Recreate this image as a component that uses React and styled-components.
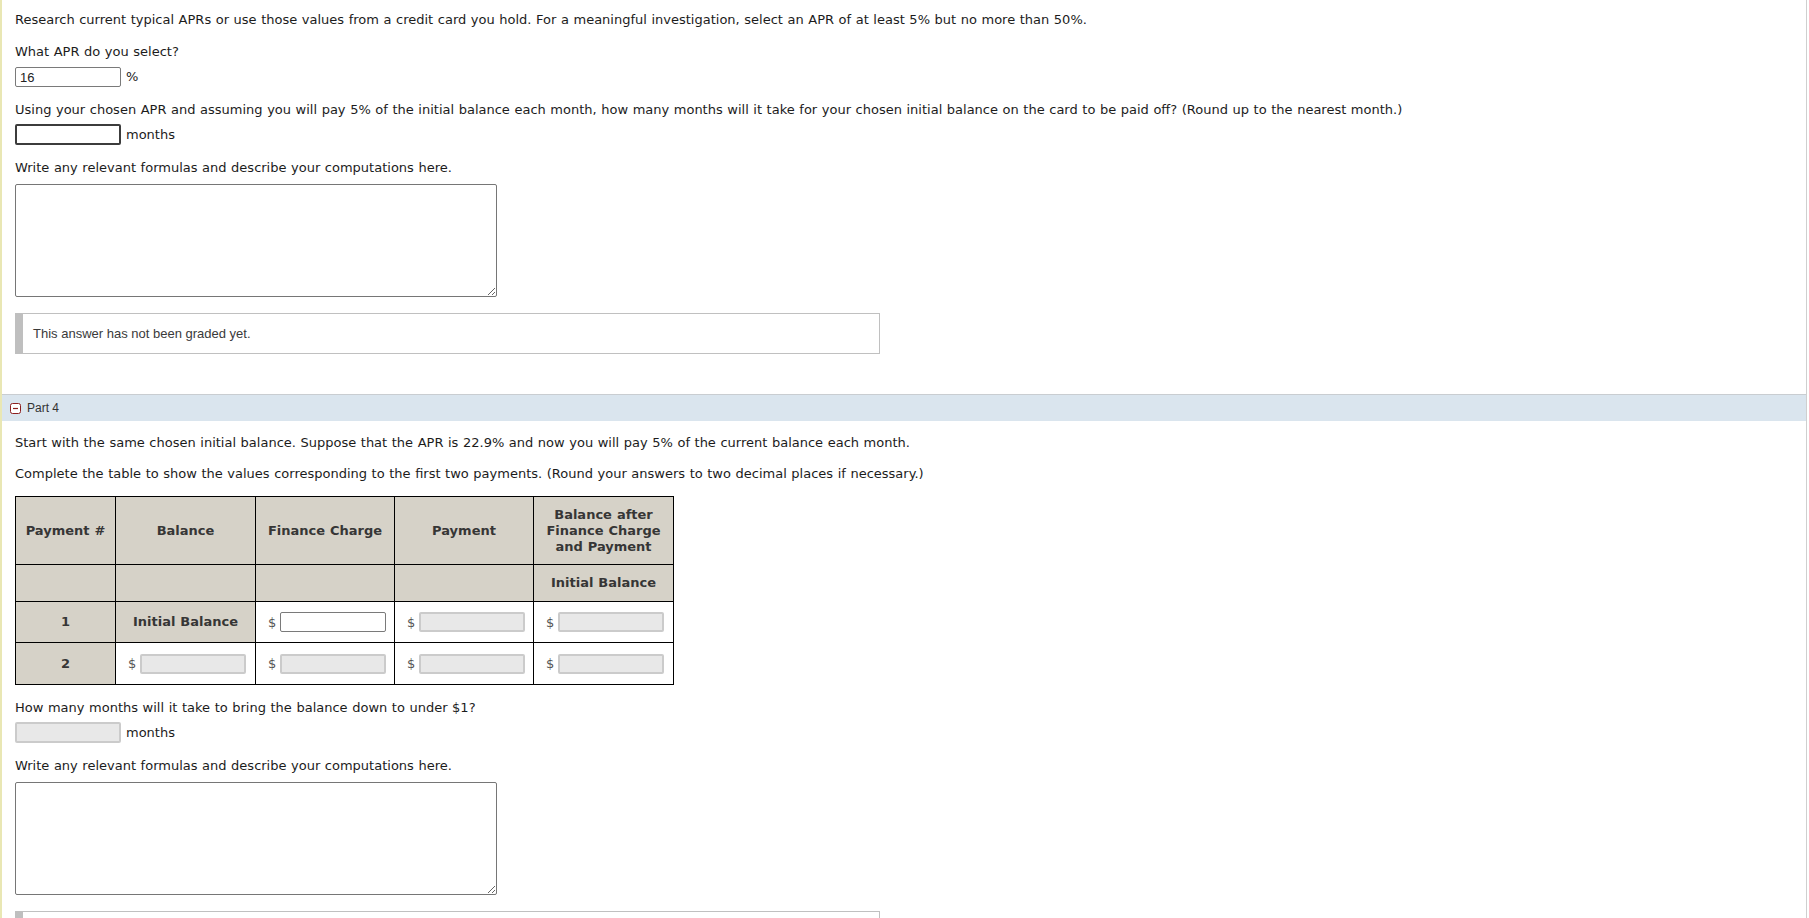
import React from "react";
import styled, { createGlobalStyle } from "styled-components";

const GlobalStyle = createGlobalStyle`
	html, body {
		margin: 0;
		padding: 0;
		background: #ffffff;
	}
	body {
		font-family: "DejaVu Sans", Verdana, sans-serif;
		font-size: 13px;
		word-spacing: 0.44px;
		color: #1c1c1c;
	}
	* {
		box-sizing: border-box;
	}
`;

const Page = styled.div`
	width: 1807px;
	min-height: 918px;
	border-left: 2px solid #e9e7b4;
	border-right: 1px solid #cfcfcf;
	padding-top: 12px;
`;

const Section = styled.div`
	padding: 0 13px;
	display: flex;
	flex-direction: column;
	align-items: flex-start;
`;

const Prompt = styled.p`
	margin: ${({ $mt }) => $mt || 0}px 0 0 0;
	line-height: 16px;
	height: 16px;
	white-space: nowrap;
`;

const AnswerRow = styled.div`
	margin-top: ${({ $mt }) => $mt || 0}px;
	display: flex;
	align-items: center;
	gap: 5px;
	line-height: 16px;
`;

const TextInput = styled.input`
	width: 106px;
	height: ${({ $variant }) => ($variant === "dark" ? 21 : 20)}px;
	margin: 0;
	padding: 0 4px;
	font-family: "Liberation Sans", Arial, sans-serif;
	font-size: 13px;
	word-spacing: 0;
	color: #222;
	border-radius: 2px;
	outline: none;
	background: ${({ $variant }) => ($variant === "off" ? "#e8e8e8" : "#ffffff")};
	border: ${({ $variant }) =>
		$variant === "dark"
			? "2px solid #3c3c3c"
			: $variant === "off"
			? "2px solid #cbcbcb"
			: "1px solid #7a7a7a"};
`;

const Notes = styled.textarea`
	margin-top: ${({ $mt }) => $mt || 0}px;
	width: 482px;
	height: 113px;
	border: 1px solid #767676;
	border-radius: 2px;
	resize: both;
	font-family: "Liberation Sans", Arial, sans-serif;
	font-size: 13px;
	outline: none;
`;

const GradeBox = styled.div`
	margin-top: ${({ $mt }) => $mt || 0}px;
	width: 865px;
	height: 41px;
	border: 1px solid #c0c0c0;
	border-left: 8px solid #bfbfbf;
	display: flex;
	align-items: center;
	padding-left: 10px;
	font-family: "Liberation Sans", Arial, sans-serif;
	font-size: 13px;
	word-spacing: 0;
	color: #3a3a3a;
`;

const PartBar = styled.div`
	margin-top: 40px;
	height: 27px;
	border-top: 1px solid #c9cdd1;
	background: #dae5ee;
	display: flex;
	align-items: center;
	gap: 6px;
	padding-left: 8px;
	font-family: "Liberation Sans", Arial, sans-serif;
	font-size: 12px;
	word-spacing: 0;
	color: #333;
`;

const Collapse = () => (
	<svg width='11' height='11' viewBox='0 0 11 11'>
		<rect x='0.5' y='0.5' width='10' height='10' rx='2' fill='#fff' stroke='#8c1f1f' />
		<line x1='3' y1='5.5' x2='8' y2='5.5' stroke='#8c1f1f' strokeWidth='1.2' />
	</svg>
);

const Grid = styled.table`
	margin-top: 14px;
	border-collapse: collapse;
	table-layout: fixed;
	width: 659px;
	border: 1px solid #000;
`;

const Row = styled.tr`
	height: ${({ $h }) => $h}px;
`;

const Head = styled.th`
	border: 1px solid #000;
	background: #d6d2c8;
	color: #363636;
	font-weight: bold;
	font-size: 13px;
	line-height: 16px;
	text-align: center;
	padding: 0 4px;
	vertical-align: middle;
`;

const Cell = styled.td`
	border: 1px solid #000;
	background: #fff;
	padding: 0 6px 0 12px;
	vertical-align: middle;
	white-space: nowrap;
`;

const Money = styled.div`
	display: flex;
	align-items: center;
	gap: 4px;
	color: #555;
`;

const cols = [100, 140, 139, 139, 140];

const MoneyField = ({ variant = "off" }) => (
	<Money>
		<span>$</span>
		<TextInput $variant={variant} />
	</Money>
);

export default function App() {
	return (
		<>
			<GlobalStyle />
			<Page>
				<Section>
					<Prompt>
						Research current typical APRs or use those values from a credit card you hold. For a
						meaningful investigation, select an APR of at least 5% but no more than 50%.
					</Prompt>
					<Prompt $mt={16}>What APR do you select?</Prompt>
					<AnswerRow $mt={7}>
						<TextInput defaultValue='16' />
						<span>%</span>
					</AnswerRow>
					<Prompt $mt={15}>
						Using your chosen APR and assuming you will pay 5% of the initial balance each month,
						how many months will it take for your chosen initial balance on the card to be paid
						off? (Round up to the nearest month.)
					</Prompt>
					<AnswerRow $mt={6}>
						<TextInput $variant='dark' />
						<span>months</span>
					</AnswerRow>
					<Prompt $mt={15}>Write any relevant formulas and describe your computations here.</Prompt>
					<Notes $mt={8} />
					<GradeBox $mt={16}>This answer has not been graded yet.</GradeBox>
				</Section>

				<PartBar>
					<Collapse />
					<span>Part 4</span>
				</PartBar>

				<Section>
					<Prompt $mt={14}>
						Start with the same chosen initial balance. Suppose that the APR is 22.9% and now you
						will pay 5% of the current balance each month.
					</Prompt>
					<Prompt $mt={15}>
						Complete the table to show the values corresponding to the first two payments. (Round
						your answers to two decimal places if necessary.)
					</Prompt>
					<Grid>
						<colgroup>
							{cols.map((w, i) => (
								<col key={i} style={{ width: w }} />
							))}
						</colgroup>
						<tbody>
							<Row $h={68}>
								<Head>Payment #</Head>
								<Head>Balance</Head>
								<Head>Finance Charge</Head>
								<Head>Payment</Head>
								<Head>
									Balance after
									<br />
									Finance Charge
									<br />
									and Payment
								</Head>
							</Row>
							<Row $h={37}>
								<Head />
								<Head />
								<Head />
								<Head />
								<Head>Initial Balance</Head>
							</Row>
							<Row $h={41}>
								<Head>1</Head>
								<Head>Initial Balance</Head>
								<Cell>
									<MoneyField variant='on' />
								</Cell>
								<Cell>
									<MoneyField />
								</Cell>
								<Cell>
									<MoneyField />
								</Cell>
							</Row>
							<Row $h={42}>
								<Head>2</Head>
								<Cell>
									<MoneyField />
								</Cell>
								<Cell>
									<MoneyField />
								</Cell>
								<Cell>
									<MoneyField />
								</Cell>
								<Cell>
									<MoneyField />
								</Cell>
							</Row>
						</tbody>
					</Grid>
					<Prompt $mt={15}>How many months will it take to bring the balance down to under $1?</Prompt>
					<AnswerRow $mt={6}>
						<TextInput $variant='off' style={{ height: 21 }} />
						<span>months</span>
					</AnswerRow>
					<Prompt $mt={15}>Write any relevant formulas and describe your computations here.</Prompt>
					<Notes $mt={8} />
					<GradeBox $mt={16} />
				</Section>
			</Page>
		</>
	);
}
